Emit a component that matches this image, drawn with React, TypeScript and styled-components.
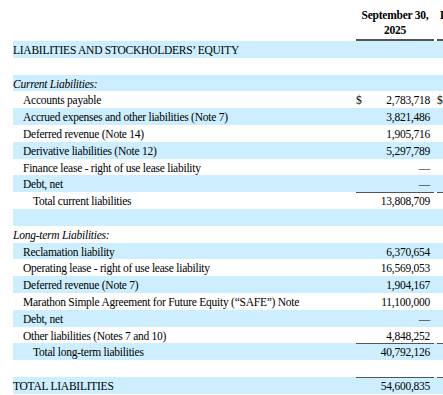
import React from "react";
import styled, { createGlobalStyle } from "styled-components";

const Global = createGlobalStyle`
  html, body { margin: 0; padding: 0; background: #fff; overflow: hidden; }
  body { font-family: "Liberation Serif", "Times New Roman", serif; color: #000; }
`;

const Page = styled.div`
  padding-left: 13px;
  width: 700px;
  font-size: 11.5px;
  letter-spacing: -0.25px;
`;

const COLS = "343px 78px 3px 78px 200px";

const HeaderRow = styled.div`
  display: grid;
  grid-template-columns: ${COLS};
  height: 41px;
  align-items: end;
`;

const HeadCell = styled.div<{ $shift?: number }>`
  font-weight: bold;
  line-height: 15px;
  text-align: center;
  padding-bottom: 1px;
  border-bottom: 2px solid #555;
  box-sizing: border-box;
  height: 41px;
  display: flex;
  flex-direction: column;
  justify-content: flex-end;
  white-space: nowrap;
  & > span {
    transform: translateX(${(p) => p.$shift ?? 0}px);
  }
`;

const Row = styled.div<{ $shade: boolean }>`
  display: grid;
  grid-template-columns: ${COLS};
  height: 16.8px;
  line-height: 18.5px;
  background: ${(p) => (p.$shade ? "#CCEEFF" : "#fff")};
`;

const Label = styled.div<{ $indent: number; $italic?: boolean }>`
  padding-left: ${(p) => p.$indent}px;
  font-style: ${(p) => (p.$italic ? "italic" : "normal")};
  white-space: nowrap;
`;

const Amount = styled.div<{ $rule?: boolean }>`
  display: flex;
  justify-content: space-between;
  padding-right: 4px;
  box-sizing: border-box;
  border-top: ${(p) => (p.$rule ? "1.5px solid #555" : "0 solid transparent")};
  line-height: ${(p) => (p.$rule ? "17px" : "18.5px")};
  white-space: nowrap;
`;

const Gap = styled.div``;

type Item = {
  label: string;
  indent?: number;
  italic?: boolean;
  value?: string;
  dollar?: boolean;
  rule?: boolean;
};

const rows: Item[] = [
  { label: "LIABILITIES AND STOCKHOLDERS\u2019 EQUITY" },
  { label: "" },
  { label: "Current Liabilities:", italic: true },
  { label: "Accounts payable", indent: 10, value: "2,783,718", dollar: true },
  { label: "Accrued expenses and other liabilities (Note 7)", indent: 10, value: "3,821,486" },
  { label: "Deferred revenue (Note 14)", indent: 10, value: "1,905,716" },
  { label: "Derivative liabilities (Note 12)", indent: 10, value: "5,297,789" },
  { label: "Finance lease - right of use lease liability", indent: 10, value: "\u2014" },
  { label: "Debt, net", indent: 10, value: "\u2014" },
  { label: "Total current liabilities", indent: 20, value: "13,808,709", rule: true },
  { label: "" },
  { label: "Long-term Liabilities:", italic: true },
  { label: "Reclamation liability", indent: 10, value: "6,370,654" },
  { label: "Operating lease - right of use lease liability", indent: 10, value: "16,569,053" },
  { label: "Deferred revenue (Note 7)", indent: 10, value: "1,904,167" },
  { label: "Marathon Simple Agreement for Future Equity (\u201cSAFE\u201d) Note", indent: 10, value: "11,100,000" },
  { label: "Debt, net", indent: 10, value: "\u2014" },
  { label: "Other liabilities (Notes 7 and 10)", indent: 10, value: "4,848,252" },
  { label: "Total long-term liabilities", indent: 20, value: "40,792,126", rule: true },
  { label: "" },
  { label: "TOTAL LIABILITIES", value: "54,600,835", rule: true },
];

export default function App() {
  return (
    <>
      <Global />
      <Page>
        <HeaderRow>
          <div />
          <HeadCell>
            <span>September 30,</span>
            <span>2025</span>
          </HeadCell>
          <Gap />
          <HeadCell $shift={-4}>
            <span>December 31,</span>
            <span>2024</span>
          </HeadCell>
          <div />
        </HeaderRow>
        {rows.map((r, i) => (
          <Row key={i} $shade={i % 2 === 0}>
            <Label $indent={r.indent ?? 0} $italic={r.italic}>
              {r.label}
            </Label>
            <Amount $rule={r.rule}>
              <span>{r.dollar ? "$" : ""}</span>
              <span>{r.value ?? ""}</span>
            </Amount>
            <Gap />
            <Amount $rule={r.rule}>
              <span>{r.dollar ? "$" : ""}</span>
              <span />
            </Amount>
            <div />
          </Row>
        ))}
      </Page>
    </>
  );
}
